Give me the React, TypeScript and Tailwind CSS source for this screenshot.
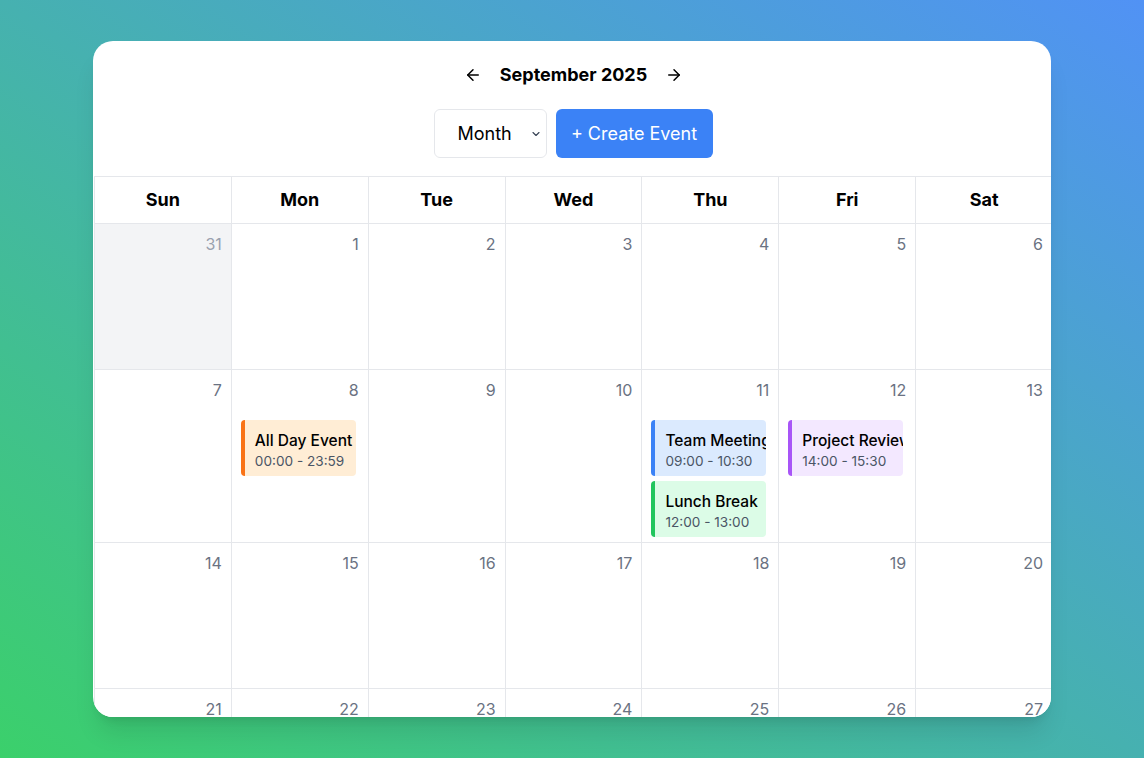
import { ChevronDown, ArrowLeft, ArrowRight } from "lucide-react";

type Ev = { title: string; time: string; bar: string; bg: string };

const EVENTS: Record<number, Ev[]> = {
  8: [{ title: "All Day Event", time: "00:00 - 23:59", bar: "border-[#f97316]", bg: "bg-[#ffedd5]" }],
  11: [
    { title: "Team Meeting", time: "09:00 - 10:30", bar: "border-[#3b82f6]", bg: "bg-[#dbeafe]" },
    { title: "Lunch Break", time: "12:00 - 13:00", bar: "border-[#22c55e]", bg: "bg-[#dcfce7]" },
  ],
  12: [{ title: "Project Review", time: "14:00 - 15:30", bar: "border-[#a855f7]", bg: "bg-[#f3e8ff]" }],
};

const DAYS = ["Sun", "Mon", "Tue", "Wed", "Thu", "Fri", "Sat"];

export default function App() {
  // Aug 31 then Sep 1..
  const cells: { day: number; outside: boolean }[] = [{ day: 31, outside: true }];
  for (let d = 1; d <= 34; d++) cells.push({ day: d, outside: false });

  return (
    <div
      className="flex h-[758px] w-full items-center justify-center bg-[linear-gradient(to_top_right,#3bd06b,#5192f5)]"
      style={{ fontFamily: "Inter, 'Noto Sans', sans-serif" }}
    >
      <div className="h-[676px] w-[958px] overflow-hidden rounded-[20px] bg-white shadow-xl">
        <div className="flex flex-col items-center pt-[20px]">
          <div className="ml-[3px] flex items-center gap-[18px]">
            <button className="text-black">
              <ArrowLeft size={18} strokeWidth={2} />
            </button>
            <h2 className="text-[18px] font-bold leading-[28px] text-black">September 2025</h2>
            <button className="text-black">
              <ArrowRight size={18} strokeWidth={2} />
            </button>
          </div>
          <div className="ml-[2px] mt-[20px] flex items-center gap-[9px]">
            <div className="flex h-[49px] w-[113px] items-center justify-between rounded-md border border-gray-200 bg-white pl-[23px] pr-[4px] text-[18px] text-black">
              <span>Month</span>
              <ChevronDown size={12} strokeWidth={2.2} className="text-gray-700" />
            </div>
            <button className="h-[49px] w-[157px] rounded-md bg-[#3b82f6] text-[18px] text-white">
              + Create Event
            </button>
          </div>
        </div>

        <div className="ml-px mt-[18px] grid w-[959px] grid-cols-7 border-t border-l border-gray-200">
          {DAYS.map((d) => (
            <div
              key={d}
              className="border-r border-b border-gray-200 py-3 text-center text-[18px] font-bold leading-[22px] text-black"
            >
              {d}
            </div>
          ))}
          {cells.map((c, i) => {
            const evs = c.outside ? [] : EVENTS[c.day] ?? [];
            return (
              <div
                key={i}
                className={`min-h-[146px] border-r border-b border-gray-200 px-2 pt-2 pb-[5px] ${
                  c.outside ? "bg-gray-100" : "bg-white"
                }`}
              >
                <div
                  className={`pr-[1px] text-right text-base leading-6 ${
                    c.outside ? "text-gray-400" : "text-gray-500"
                  }`}
                >
                  {c.day}
                </div>
                {evs.length > 0 && (
                  <div className="mt-[18px] flex flex-col gap-[5px]">
                    {evs.map((e) => (
                      <div
                        key={e.title}
                        className={`ml-px mr-1 overflow-hidden whitespace-nowrap rounded border-l-4 ${e.bar} ${e.bg} pl-[10px] pt-[11px] pb-[5px]`}
                      >
                        <div className="text-[15.5px] font-medium leading-5 text-black">{e.title}</div>
                        <div className="text-[13.6px] leading-5 text-gray-600">{e.time}</div>
                      </div>
                    ))}
                  </div>
                )}
              </div>
            );
          })}
        </div>
      </div>
    </div>
  );
}
